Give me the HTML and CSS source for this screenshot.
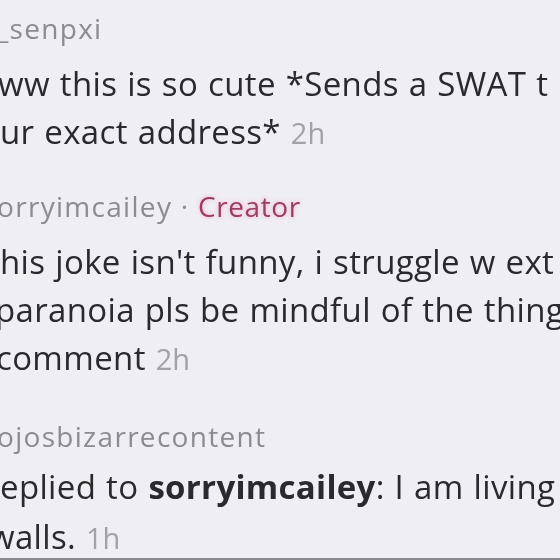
FILE: index.html
```html
<!DOCTYPE html>
<html lang="en">
<head>
<meta charset="utf-8">
<title>Comments</title>
<link rel="stylesheet" href="styles.css">
</head>
<body>
<main class="feed">
  <section class="comment">
    <div class="user cut-underscore">_senpxi</div>
    <div class="text">
      <div class="line cut-w">ww this is so cute *Sends a SWAT t</div>
      <div class="line">ur exact address* <span class="time">2h</span></div>
    </div>
  </section>
  <section class="comment">
    <div class="user cut-o">orryimcailey <span class="dot">·</span> <span class="creator">Creator</span></div>
    <div class="text">
      <div class="line">his joke isn't funny, i struggle w ext</div>
      <div class="line cut-p">paranoia pls be mindful of the thing</div>
      <div class="line cut-c">comment <span class="time">2h</span></div>
    </div>
  </section>
  <section class="comment reply">
    <div class="user cut-o">ojosbizarrecontent</div>
    <div class="text">
      <div class="line">eplied to <span class="mention">sorryimcailey</span>: I am living</div>
      <div class="line cut-ww">walls. <span class="time">1h</span></div>
    </div>
  </section>
</main>
</body>
</html>
```
FILE: styles.css
```css
html, body {
  margin: 0;
  padding: 0;
}
body {
  height: 560px;
  box-sizing: border-box;
  overflow: hidden;
  background: #efeef2;
  border-bottom: 2px solid #8a898d;
}
.feed {
  padding-top: 13px;
  font-family: "Open Sans", Lato, sans-serif;
  filter: blur(0.45px);
}
.comment + .comment {
  margin-top: 34px;
}
.comment.reply {
  margin-top: 38px;
}
.user {
  font-size: 28px;
  line-height: 30px;
  color: #8c8b90;
  white-space: nowrap;
  margin-bottom: 17px;
  letter-spacing: 1.3px;
}
.reply .user {
  margin-bottom: 11px;
}
.dot {
  color: #8c8b90;
}
.creator {
  color: #9a3e63;
  letter-spacing: 0.6px;
  text-shadow: 0 0 4px rgba(245, 130, 180, 0.6);
}
.text {
  font-size: 33px;
  font-weight: 500;
  line-height: 48px;
  color: #2a292d;
  letter-spacing: 0.35px;
  word-spacing: 1px;
}
.reply .text {
  line-height: 50px;
}
.line {
  white-space: nowrap;
}
.time {
  font-size: 29px;
  font-weight: 400;
  letter-spacing: 0;
  color: #a2a1a6;
}
.mention {
  font-weight: 700;
  letter-spacing: 0.3px;
}
.cut-underscore { text-indent: -4px; }
.cut-w { text-indent: -2px; }
.cut-o { text-indent: -3px; }
.cut-p { text-indent: -5px; }
.cut-c { text-indent: -4px; }
.cut-ww { text-indent: -11px; }
```
